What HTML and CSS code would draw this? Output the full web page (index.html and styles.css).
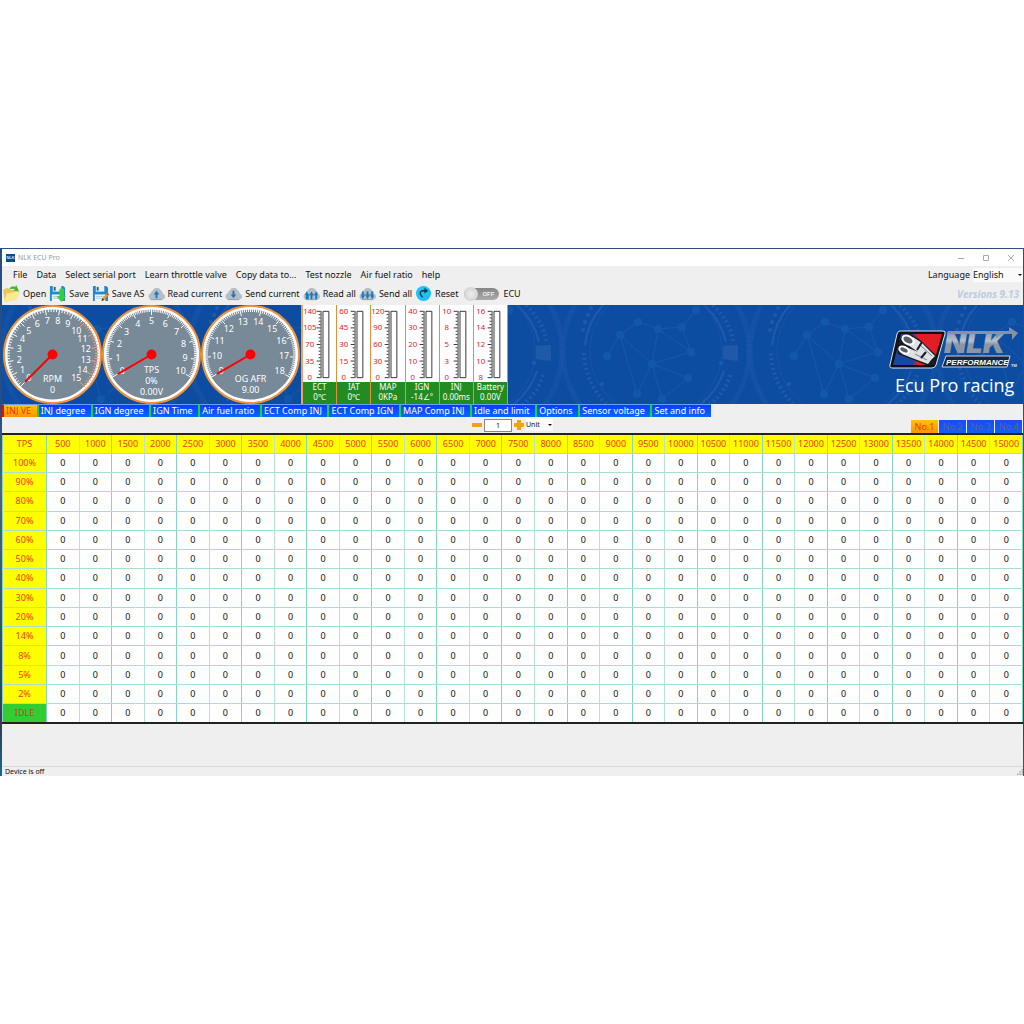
FILE: index.html
```html
<!DOCTYPE html>
<html lang="en">
<head>
<meta charset="utf-8">
<title>NLK ECU Pro</title>
<link rel="stylesheet" href="styles.css">
</head>
<body>
<svg class="defs" aria-hidden="true">
  <defs>
    <linearGradient id="steel" x1="0" y1="0" x2="0" y2="1">
      <stop offset="0" stop-color="#64758d"/><stop offset=".45" stop-color="#b9c0c9"/><stop offset=".55" stop-color="#8c97a5"/><stop offset="1" stop-color="#8995a5"/>
    </linearGradient>
    <linearGradient id="shield" x1="0" y1="0" x2="1" y2="0">
      <stop offset="0" stop-color="#1748a5"/><stop offset=".4" stop-color="#1748a5"/><stop offset=".5" stop-color="#e21d25"/><stop offset="1" stop-color="#e21d25"/>
    </linearGradient>
    <symbol id="cloud" viewBox="0 0 18 16">
      <path d="M4 14.500a3.500 3.500 0 0 1-.8-6.900A3 3 0 0 1 5 4.800 4.700 4.700 0 0 1 13.600 4.500 3.800 3.800 0 0 1 15.500 8a3.300 3.300 0 0 1-.7 6.500z" fill="#b5bec4"/>
      <path d="M3 14.500h12" stroke="#929da5"/>
    </symbol>
    <symbol id="floppy" viewBox="0 0 18 18">
      <path d="M1 1h14l2 2v14H1z" fill="#2389c9"/><path d="M4 1h9v6H4z" fill="#e8f0f5"/><path d="M5 2h2v4H5z" fill="#245f86"/><path d="M3 10h11v7H3z" fill="#f3f7fa"/><path d="M4 12h9M4 14h9" stroke="#9fc5dc"/>
    </symbol>
  </defs>
</svg>
<main class="window">
  <header class="titlebar">
    <span class="app-icon">NLK</span>
    <h1>NLK ECU Pro</h1>
    <div class="window-buttons">
      <button aria-label="Minimize"><svg viewBox="0 0 8 8"><path d="M1 4.500h6"/></svg></button>
      <button aria-label="Maximize"><svg viewBox="0 0 8 8"><path d="M1.500 1.500h5v5h-5z"/></svg></button>
      <button aria-label="Close"><svg viewBox="0 0 8 8"><path d="M1 1l6 6M7 1L1 7"/></svg></button>
    </div>
  </header>

  <nav class="menubar">
    <button>File</button><button>Data</button><button>Select serial port</button><button>Learn throttle valve</button><button>Copy data to...</button><button>Test nozzle</button><button>Air fuel ratio</button><button>help</button>
    <div class="language">
      <label for="language">Language</label>
      <span class="drop"><select id="language"><option>English</option></select></span>
    </div>
  </nav>

  <div class="toolbar">
    <button><svg viewBox="0 0 18 18"><path d="M0 5l5-2 2 2h7v10L2 18z" fill="#e9c85a"/><path d="M1 18L4 9l14-3-3 9z" fill="#fbe98f"/><path d="M6 5q3-5 7-3l1-2 3 7-6-1 2-1q-3-2-7 0z" fill="#45b52d"/></svg>Open</button>
    <button><svg viewBox="0 0 18 18"><use href="#floppy"/><path d="M11 4h5v8h2l-5 6-5-6h3z" fill="#36cf35"/></svg>Save</button>
    <button><svg viewBox="0 0 18 18"><use href="#floppy"/><path d="M16 8l2 2-5 6-3 1 1-3z" fill="#f2932d"/><path d="M15 9l1-1 2 2-1 1z" fill="#db3d2a"/><path d="M10 17l1-3 2 2z" fill="#333"/></svg>Save AS</button>
    <button><svg viewBox="0 0 18 16"><use href="#cloud"/><path d="M9 5l3 4h-2v4H8V9H6z" fill="#1b78bd"/></svg>Read current</button>
    <button><svg viewBox="0 0 18 16"><use href="#cloud"/><path d="M9 13l3-4h-2V5H8v4H6z" fill="#1b78bd"/></svg>Send current</button>
    <button><svg viewBox="0 0 18 16"><use href="#cloud"/><path d="M4 6l2 3v5H3V9H2zM9 6l2 3h-1v5H8V9H7zM14 6l2 3h-1v5h-2V9h-1z" fill="#1b78bd"/><path d="M3 9.500h12" stroke="#1b78bd"/></svg>Read all</button>
    <button><svg viewBox="0 0 18 16"><use href="#cloud"/><path d="M4 14l2-4H5V6H3v4H2zM9 14l2-4h-1V6H8v4H7zM14 14l2-4h-1V6h-2v4h-1z" fill="#1b78bd"/><path d="M3 9.500h12" stroke="#1b78bd"/></svg>Send all</button>
    <button><svg viewBox="0 0 18 18"><circle cx="9" cy="9" r="8" fill="#19c3f5"/><path d="M8 13Q3 8 8 6l4 0" fill="none" stroke="#12323d" stroke-width="1.500"/><path d="M10 3l4 3-4 3z" fill="#12323d"/></svg>Reset</button>
    <label class="toggle"><input type="checkbox"><span class="track">OFF</span>ECU</label>
    <span class="version">Versions 9.13</span>
  </div>

  <section class="banner">
    <svg class="backdrop" aria-hidden="true">
      <pattern id="network" x="2" y="0" width="187" height="99" patternUnits="userSpaceOnUse">
        <g fill="none" stroke="#2059aa">
          <g stroke="#1a55a7" stroke-width="5" stroke-dasharray="1 1"><circle cx="91" cy="46" r="93"/><circle cx="-96" cy="46" r="93"/><circle cx="278" cy="46" r="93"/></g>
          <path d="M20 40A71 71 0 0 1 38 0M139 0a71 71 0 0 1 22 37M159 66a71 71 0 0 1-23 33" stroke-width="2"/>
          <circle cx="91" cy="46" r="66" stroke="#1652a5"/>
          <path d="M148 0q18 18 20 36M165 70q-5 18-20 29M19 48q1 29 22 51" stroke-width="4" stroke-dasharray="2 3"/>
        </g>
        <path d="M158 41l15-1v16l-15-2z" fill="#2159aa"/>
        <g fill="#2059aa"><circle cx="26" cy="3" r="2"/><circle cx="23" cy="10" r="2"/><circle cx="20" cy="17" r="2"/><circle cx="18" cy="25" r="2"/><circle cx="37" cy="79" r="2"/><circle cx="156" cy="58" r="2"/></g>
        <path d="M42 51L55 30 73 17 93 24l24-2 14-17M117 22l9 25L93 24l-6 35-32-29 17 59 15-30 39-12M87 59l36 14M87 59l10 35 26-21" fill="none" stroke="#1856aa"/>
        <g fill="#1158a9"><circle cx="42" cy="51" r="4"/><circle cx="55" cy="30" r="4"/><circle cx="73" cy="17" r="4"/><circle cx="93" cy="24" r="4"/><circle cx="117" cy="22" r="4"/><circle cx="131" cy="5" r="4"/><circle cx="126" cy="47" r="4"/><circle cx="87" cy="59" r="4"/><circle cx="123" cy="73" r="4"/><circle cx="72" cy="89" r="4"/><circle cx="97" cy="94" r="4"/></g>
      </pattern>
      <rect width="100%" height="100%" fill="url(#network)"/>
    </svg>
    <div class="gauges" id="gauges"></div>
    <div class="meters" id="meters"></div>
    <div class="brand">
      <svg class="logo" viewBox="0 0 130 44" role="img" aria-label="NLK Performance">
        <path d="M11 5h43q3 0 2 3l-9 31q-1 3-4 3H4q-4 0-3-3L8 8q1-3 3-3z" fill="#111" stroke="#dfe5ee"/>
        <path d="M12 8h41l-9 31H4z" fill="url(#shield)"/>
        <path d="M12 11l8-4 10 6 17 16-1 10h-9L22 33 9 28l-1-9z" fill="#171b24"/>
        <path d="M24 11l9 6 13 13-4 4-13-8-10-7zM17 21l12 5 13 8-3 4-16-6-10-4z" fill="#dfe1e4"/>
        <ellipse cx="19" cy="14" rx="6" ry="4" transform="rotate(30 19 14)" fill="#59606c" stroke="#fff" stroke-width="2"/>
        <ellipse cx="15" cy="24" rx="5" ry="3" transform="rotate(25 15 24)" fill="#59606c" stroke="#fff" stroke-width="2"/>
        <path d="M30 18l13 12M26 28l12 6" stroke="#7a818c"/>
        <path d="M28 24l5-8M32 32l5-6" stroke="#171b24" stroke-width="2"/>
        <text x="55" y="27" class="logo-name" fill="url(#steel)">NLK</text>
        <path d="M59 5h61V1l9 6-6 7V8h-10l-6 4V8H58z" fill="#8592a5"/>
        <path d="M57 30h64l-3 11H53z" fill="#17253d" stroke="#ccd4df"/>
        <text x="57" y="39" class="logo-sub">PERFORMANCE</text>
        <text x="122" y="41" class="logo-tm">TM</text>
      </svg>
      <p>Ecu Pro racing</p>
    </div>
  </section>

  <nav class="tabs">
    <button class="active">INJ VE</button><button>INJ degree</button><button>IGN degree</button><button>IGN Time</button><button>Air fuel ratio</button><button>ECT Comp INJ</button><button>ECT Comp IGN</button><button>MAP Comp INJ</button><button>Idle and limit</button><button>Options</button><button>Sensor voltage</button><button>Set and info</button>
  </nav>

  <div class="controls">
    <div class="stepper">
      <button aria-label="Decrease"><svg viewBox="0 0 10 10"><path d="M0 3h10v4H0z"/></svg></button>
      <input type="text" value="1" aria-label="Step">
      <button aria-label="Increase"><svg viewBox="0 0 10 10"><path d="M3 0h4v3h3v4H7v3H3V7H0V3h3z"/></svg></button>
      <span class="drop unit"><select aria-label="Unit"><option>Unit</option></select></span>
    </div>
    <div class="maps"><button class="active">No.1</button><button>No.2</button><button>No.3</button><button>No.4</button></div>
  </div>

  <table class="grid" id="grid"></table>
  <footer class="status"><span>Device is off</span><svg viewBox="0 0 8 8"><path d="M6 0h2v2H6zM3 3h2v2H3zM6 3h2v2H6zM0 6h2v2H0zM3 6h2v2H3zM6 6h2v2H6z"/></svg></footer>
</main>
<script src="script.js"></script>
</body>
</html>
```
FILE: styles.css
```css
* { box-sizing: border-box; }
body { margin: 0; padding-top: 248px; background: #fff; font: 9px/12px "Noto Sans", "Open Sans", sans-serif; color: #111; }
button, input, select { font: inherit; color: inherit; margin: 0; padding: 0; border: 0; background: none; }
.defs { position: absolute; width: 0; height: 0; }
.window { border: 2px solid #39587f; border-width: 1px 1px 0 2px; border-image: linear-gradient(#284d80 0 30%, #52637a 45%, #3f5873 60%, #2e3f55 90%, #156a8c) 1; background: #efefef; }

.titlebar { display: flex; align-items: center; height: 17px; padding: 0 4px; gap: 3px; background: #fff; }
.app-icon { width: 9px; height: 8px; background: #0d489c; color: #dce7f7; font: bold 4px/8px "Liberation Sans", sans-serif; text-align: center; }
.titlebar h1 { margin: 0; font-size: 7px; font-weight: 400; color: #999; }
.window-buttons { display: flex; gap: 17px; margin-left: auto; padding-right: 4px; }
.window-buttons button { width: 8px; height: 8px; }
.window-buttons svg { display: block; width: 8px; height: 8px; fill: none; stroke: #aaa; }

.menubar { display: flex; align-items: center; gap: 9px; height: 18px; padding-left: 11px; }
.menubar button { white-space: nowrap; }
.language { display: flex; align-items: center; gap: 3px; margin-left: auto; }
.drop { position: relative; display: block; width: 50px; height: 14px; background: #fafafa; }
.drop::after { content: ""; position: absolute; right: 1px; top: 6px; border: 2px solid transparent; border-top-color: #111; pointer-events: none; }
.drop select { appearance: none; display: block; width: 100%; height: 14px; outline: 0; }

.toolbar { display: flex; align-items: center; gap: 3px; height: 21px; padding: 0 2px 2px 1px; }
.toolbar button { display: flex; align-items: center; gap: 3px; white-space: nowrap; }
.toolbar button svg { width: 17px; height: 17px; }
.toggle { display: flex; align-items: center; gap: 4px; padding-left: 3px; }
.toggle input { position: absolute; opacity: 0; }
.track { position: relative; width: 35px; height: 12px; border-radius: 6px; background: linear-gradient(#868686, #aaa); color: #eee; font: bold 6px/12px "Liberation Sans", sans-serif; padding-left: 18px; }
.track::before { content: ""; position: absolute; left: 0; top: -1px; width: 14px; height: 14px; border-radius: 50%; background: radial-gradient(#eee, #c9c9c9); }
.version { margin-left: auto; padding-right: 2px; font-family: "Open Sans", sans-serif; font-style: italic; font-weight: 700; font-size: 10px; color: #bccbdd; }

.banner { position: relative; display: flex; height: 99px; background: #0c4da2; overflow: hidden; }
.backdrop { position: absolute; inset: 0; width: 100%; height: 100%; }
.gauges { position: relative; display: flex; padding-left: 1px; }
.gauges svg { display: block; width: 99px; height: 99px; flex: none; }
.face { fill: #788998; stroke: #fff; stroke-width: 3; }
.rim { fill: none; stroke: #f0923b; stroke-width: 2; }
.tick { stroke: #fff; }
.tick.hot { stroke: #ffa07a; }
.gauge-text { fill: #fff; font-size: 9px; text-anchor: middle; }
.needle { stroke: red; stroke-width: 2; }
.hub { fill: red; }

.meters { position: relative; display: flex; width: 207px; margin-left: 1px; border-left: 2px solid #f4a05a; }
.meter { flex: 1; display: flex; flex-direction: column; border-right: 1px solid #e88d3d; background: #fff; }
.meter svg { display: block; width: 100%; height: 77px; }
.meter text { fill: #e6172a; font-size: 8px; text-anchor: middle; }
.meter .scale { fill: none; stroke: #333; }
.meter p { flex: 1; margin: 0; background: #228b22; color: #fff; font-size: 8px; line-height: 10px; text-align: center; white-space: nowrap; }

.brand { position: relative; margin-left: auto; padding: 21px 4px 0 0; color: #fff; }
.logo { display: block; width: 130px; height: 44px; }
.logo-name { font: italic 900 29px "Inter", "Liberation Sans", sans-serif; }
.logo-sub { font: italic bold 8px "Liberation Sans", sans-serif; fill: #fff; }
.logo-tm { font: bold 4px "Liberation Sans", sans-serif; fill: #dce4ef; }
.brand p { margin: 3px 0 0 6px; font: 18px/24px "Open Sans", sans-serif; white-space: nowrap; }

.tabs { display: flex; width: 69.4%; min-width: max-content; height: 13px; }
.tabs button { flex: 1 1 auto; padding: 0 2px; border-left: 2px solid #0bdd33; border-top: 1px solid #6d9cff; background: linear-gradient(#0a3cff, #0868ff); color: #fff; line-height: 10px; text-align: left; white-space: nowrap; }
.tabs .active { border-left-color: red; background: linear-gradient(#ffc400, #ff9300); color: #e8301a; }

.controls { display: grid; grid-template-columns: 1fr auto 1fr; align-items: center; height: 16px; }
.stepper { grid-column: 2; display: flex; align-items: center; gap: 2px; font-size: 7px; }
.stepper button { width: 10px; height: 10px; }
.stepper button svg { display: block; width: 10px; height: 10px; fill: #f5a114; }
.stepper input { width: 28px; height: 13px; border: 1px solid #888; background: #fff; text-align: center; }
.unit { width: 27px; height: 12px; }
.unit::after { top: 5px; }
.unit select { height: 12px; }
.maps { display: flex; justify-content: flex-end; gap: 1px; padding: 3px 1px 0 0; align-self: stretch; }
.maps button { width: 27px; background: linear-gradient(#1b49ff, #0d60f5); color: #5d6684; line-height: 12px; }
.maps .active { background: linear-gradient(#ffc400, #ff9300); color: #f03a10; }

.grid { width: 100%; height: 291px; table-layout: fixed; border-collapse: collapse; border: 2px solid #222; border-left-width: 1px; border-right-width: 1px; background: #fff; font-size: 9px; }
.grid th, .grid td { height: 19px; padding: 0; border: 1px solid #84d6bd; text-align: center; font-weight: 400; }
.grid td:nth-child(even), .grid th:nth-child(even) { border-right-color: #b5e5d7; }
.grid td, .grid th { border-bottom-color: #a8e0d0; }
.grid th { background: #ff0; color: #f03a10; }
.grid th:first-child { width: 44px; }
.grid tbody .idle { background: #32cd32; color: #c8441c; }

.status { display: flex; align-items: center; justify-content: space-between; height: 10px; margin-top: 42px; padding-left: 3px; border-top: 1px solid #d9d9d9; font-size: 7px; line-height: 9px; }
.status svg { width: 6px; height: 6px; fill: #aaa; }
```
FILE: script.js
```js
const polar = (radius, degrees) => {
  const a = degrees * Math.PI / 180;
  return [50 + radius * Math.sin(a), 50 - radius * Math.cos(a)];
};

function gauge({ from, to, sweep, minor, hot, lines }) {
  const steps = (to - from) * minor;
  let out = '<circle class="face" cx="50" cy="50" r="47"/><circle class="rim" cx="50" cy="50" r="49"/>';
  for (let i = 0; i <= steps; i++) {
    const value = from + i / minor;
    const angle = -sweep / 2 + sweep * i / steps;
    const major = i % minor === 0;
    const [x1, y1] = polar(47, angle);
    const [x2, y2] = polar(major ? 40 : 43, angle);
    out += `<line class="tick${value >= hot ? ' hot' : ''}" x1="${x1}" y1="${y1}" x2="${x2}" y2="${y2}"/>`;
    if (major) {
      const [x, y] = polar(34, angle);
      out += `<text class="gauge-text" x="${x}" y="${y + 3}">${value}</text>`;
    }
  }
  const [nx, ny] = polar(39, -sweep / 2);
  out += `<line class="needle" x1="50" y1="50" x2="${nx}" y2="${ny}"/><circle class="hub" cx="50" cy="50" r="5"/>`;
  const first = lines.length === 3 ? 69 : 78;
  lines.forEach((t, i) => { out += `<text class="gauge-text" x="50" y="${first + i * 11}">${t}</text>`; });
  return `<svg viewBox="0 0 100 100">${out}</svg>`;
}

document.getElementById('gauges').innerHTML = [
  { from: 0, to: 15, sweep: 270, minor: 5, hot: 10, lines: ['RPM', '0'] },
  { from: 0, to: 10, sweep: 240, minor: 10, hot: 99, lines: ['TPS', '0%', '0.00V'] },
  { from: 9, to: 18, sweep: 240, minor: 10, hot: 99, lines: ['OG AFR', '9.00'] }
].map(gauge).join('');

function meter([name, value, marks]) {
  let d = '';
  for (let i = 0; i <= 20; i++) {
    d += `M${i % 5 ? 16 : 14} ${5.5 + i * 3.4}H18`;
  }
  const texts = marks.map((m, i) => `<text x="7" y="${8 + i * 17}">${m}</text>`).join('');
  return `<div class="meter"><svg viewBox="0 0 34 77">${texts}<path class="scale" d="${d}M18.500 5V74M20.500 5.500h6v68h-6z"/></svg><p>${name}<br>${value}</p></div>`;
}

document.getElementById('meters').innerHTML = [
  ['ECT', '0℃', [140, 105, 70, 35, 0]],
  ['IAT', '0℃', [60, 45, 30, 15, 0]],
  ['MAP', '0KPa', [120, 90, 60, 30, 0]],
  ['IGN', '-14∠°', [40, 30, 20, 10, 0]],
  ['INJ', '0.00ms', [10, 8, 5, 3, 0]],
  ['Battery', '0.00V', [16, 14, 12, 10, 8]]
].map(meter).join('');

const speeds = Array.from({ length: 30 }, (_, i) => (i + 1) * 500);
const loads = ['100%', '90%', '80%', '70%', '60%', '50%', '40%', '30%', '20%', '14%', '8%', '5%', '2%', 'IDLE'];
document.getElementById('grid').innerHTML =
  `<tbody><tr><th>TPS</th>${speeds.map(s => `<th>${s}</th>`).join('')}</tr>` +
  loads.map(l => `<tr><th${l === 'IDLE' ? ' class="idle"' : ''}>${l}</th>${speeds.map(() => '<td>0</td>').join('')}</tr>`).join('') +
  '</tbody>';
```
